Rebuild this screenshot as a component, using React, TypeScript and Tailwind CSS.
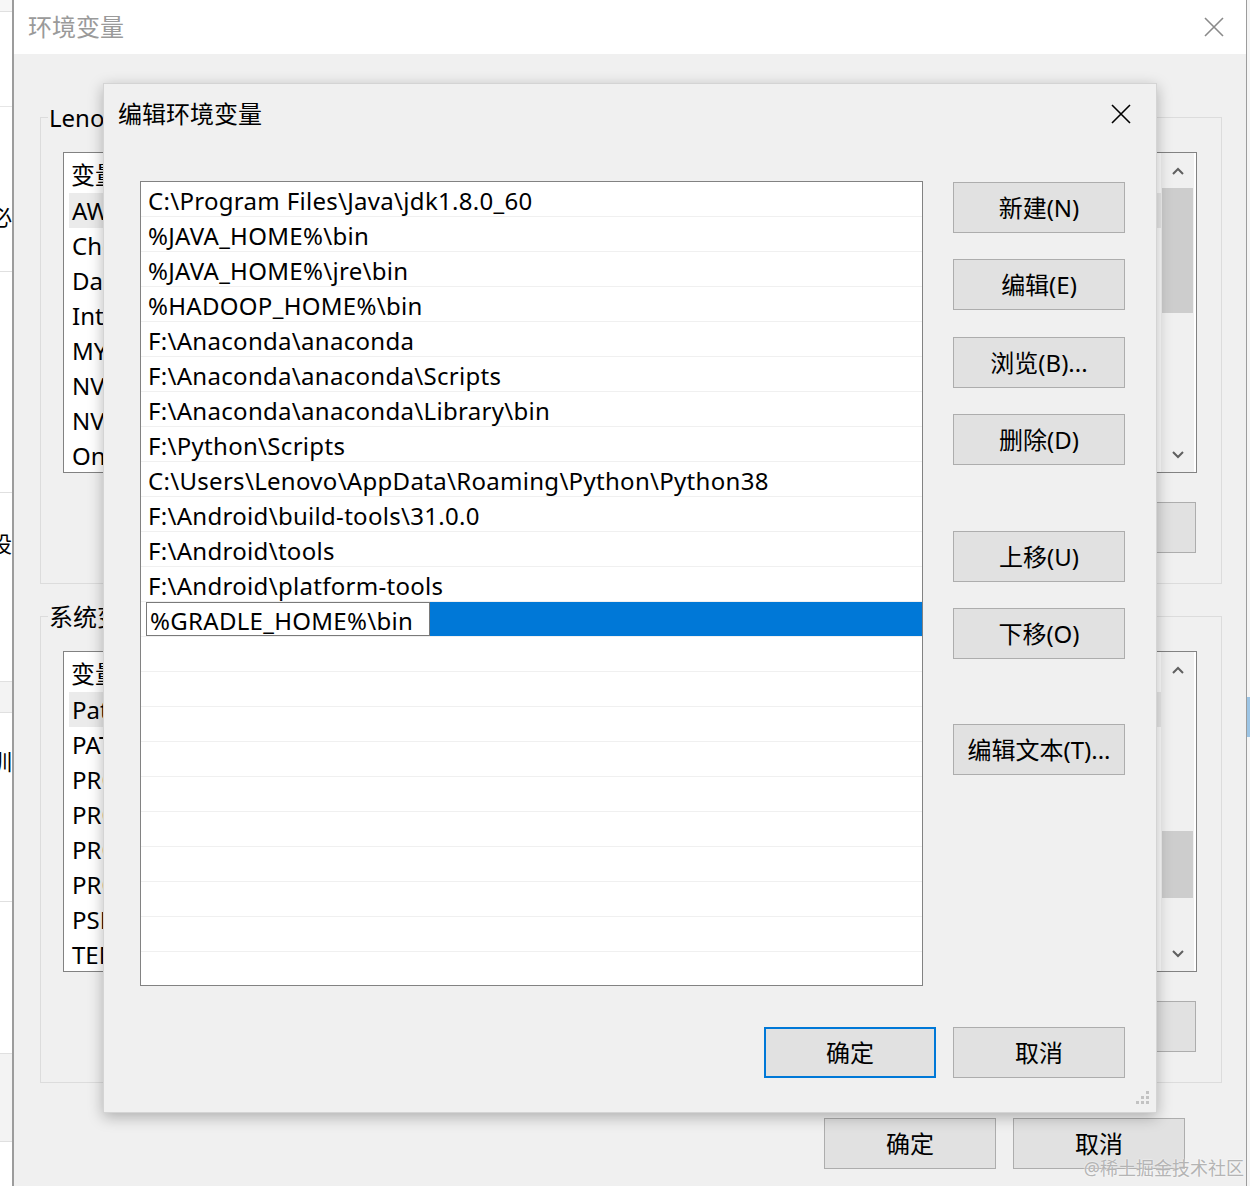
import React from 'react';

const FONT = "font-['Noto_Sans','Noto_Sans_CJK_SC',sans-serif]";

function ChevronUp() {
  return (
    <svg width="12" height="8" viewBox="0 0 12 8">
      <path d="M1 7 L6 2 L11 7" fill="none" stroke="#606060" strokeWidth="2" />
    </svg>
  );
}

function ChevronDown() {
  return (
    <svg width="12" height="8" viewBox="0 0 12 8">
      <path d="M1 1 L6 6 L11 1" fill="none" stroke="#606060" strokeWidth="2" />
    </svg>
  );
}

function CloseX({ color, size }: { color: string; size: number }) {
  return (
    <svg width={size} height={size} viewBox="0 0 20 20">
      <path d="M1 1 L19 19 M19 1 L1 19" stroke={color} strokeWidth="1.6" fill="none" />
    </svg>
  );
}

function WinButton({ label, primary, className = '' }: { label: string; primary?: boolean; className?: string }) {
  return (
    <div
      className={`h-[51px] w-[172px] shrink-0 flex items-center justify-center bg-[#e1e1e1] text-[24px] text-black ${
        primary ? 'border-2 border-[#0078d7]' : 'border border-[#adadad]'
      } ${className}`}
    >
      {label}
    </div>
  );
}

// list in the background window (mostly hidden behind the dialog)
function BgList({ rows, spacer, thumb }: { rows: string[]; spacer: string; thumb: string }) {
  return (
    <div className="h-[321px] border border-[#828282] bg-white flex overflow-hidden">
      <div className="flex-1 flex flex-col pt-[4px] text-[24px] text-black">
        <div className="h-[36px] flex items-center pl-[7px]">变量</div>
        {rows.map((r, i) => (
          <div
            key={i}
            className={`h-[35px] shrink-0 flex items-center whitespace-nowrap ${
              i === 0 ? 'ml-[5px] pl-[3px] bg-[#ebebeb]' : 'pl-[8px]'
            }`}
          >
            {r}
          </div>
        ))}
      </div>
      <div className="w-[33px] mr-[2px] bg-[#f0f0f0] flex flex-col">
        <div className="h-[35px] shrink-0 flex items-center justify-center">
          <ChevronUp />
        </div>
        <div className={spacer} />
        <div className={`${thumb} mx-[1px] bg-[#cdcdcd] shrink-0`} />
        <div className="flex-1" />
        <div className="h-[35px] shrink-0 flex items-center justify-center">
          <ChevronDown />
        </div>
      </div>
    </div>
  );
}

function GroupBox({ label, children, className = '' }: { label: string; children: React.ReactNode; className?: string }) {
  return (
    <div className={`relative border border-[#dcdcdc] h-[467px] pt-[34px] pl-[22px] pr-[24px] ${className}`}>
      <div className="absolute left-[7px] -top-[16px] px-[1px] bg-[#f0f0f0] text-[24px] text-black leading-[32px] whitespace-nowrap">
        {label}
      </div>
      {children}
    </div>
  );
}

const pathRows = [
  'C:\\Program Files\\Java\\jdk1.8.0_60',
  '%JAVA_HOME%\\bin',
  '%JAVA_HOME%\\jre\\bin',
  '%HADOOP_HOME%\\bin',
  'F:\\Anaconda\\anaconda',
  'F:\\Anaconda\\anaconda\\Scripts',
  'F:\\Anaconda\\anaconda\\Library\\bin',
  'F:\\Python\\Scripts',
  'C:\\Users\\Lenovo\\AppData\\Roaming\\Python\\Python38',
  'F:\\Android\\build-tools\\31.0.0',
  'F:\\Android\\tools',
  'F:\\Android\\platform-tools',
];

export default function App() {
  const emptyRows = Array.from({ length: 10 });

  return (
    <div className={`${FONT} relative w-[1250px] h-[1186px] overflow-hidden flex bg-[#f0f0f0]`}>
      {/* edge of another window on the left */}
      <div className="w-[12px] shrink-0 flex flex-col bg-[#f7f7f7] text-[22px] text-black">
        <div className="h-[12px] border-b border-[#e0e0e0]" />
        <div className="h-[95px] bg-white border-b border-[#e6e6e6]" />
        <div className="h-[165px] bg-white border-b border-[#e0e0e0] flex flex-col justify-end pb-[38px] overflow-hidden">
          <div className="flex justify-end whitespace-nowrap">务必</div>
        </div>
        <div className="h-[221px] bg-white border-b border-[#e0e0e0] overflow-hidden pt-[32px]">
          <div className="flex justify-end whitespace-nowrap">
            <span className="text-[#2e86de]">链接</span>，
          </div>
        </div>
        <div className="h-[189px] bg-white border-b border-[#e0e0e0] overflow-hidden pt-[34px]">
          <div className="flex justify-end whitespace-nowrap">预设</div>
        </div>
        <div className="h-[31px] bg-[#f3f3f3] border-b border-[#e0e0e0]" />
        <div className="h-[189px] bg-white border-b border-[#e0e0e0] overflow-hidden pt-[32px]">
          <div className="flex justify-end whitespace-nowrap">培训</div>
        </div>
        <div className="h-[152px] bg-white border-b border-[#e0e0e0]" />
        <div className="h-[88px] bg-[#f3f3f3] border-b border-[#e0e0e0]" />
        <div className="flex-1 bg-white" />
      </div>

      {/* background window: 环境变量 */}
      <div className="w-[1235px] shrink-0 border-l-2 border-r border-[#9c9c9c] flex flex-col bg-[#f0f0f0]">
        <div className="h-[54px] shrink-0 bg-white flex items-center justify-between pl-[14px] pr-[22px]">
          <span className="text-[24px] text-[#9a9a9a]">环境变量</span>
          <CloseX color="#8a8a8a" size={20} />
        </div>
        <div className="flex flex-col pl-[26px] pr-[24px]">
          <GroupBox label="Lenovo 的用户变量(U)" className="mt-[63px]">
            <BgList
              rows={['AWS_PROFILE', 'ChocolateyLastPathUpdate', 'DataGrip', 'IntelliJ IDEA', 'MYSQL_HOME', 'NVM_HOME', 'NVM_SYMLINK', 'OneDrive']}
              spacer="h-0"
              thumb="h-[125px]"
            />
            <div className="flex justify-end gap-[17px] mt-[29px] mr-[1px]">
              <WinButton label="新建(N)..." />
              <WinButton label="编辑(E)..." />
              <WinButton label="删除(D)" />
            </div>
          </GroupBox>
          <GroupBox label="系统变量(S)" className="mt-[32px]">
            <BgList
              rows={['Path', 'PATHEXT', 'PROCESSOR_ARCHITECTURE', 'PROCESSOR_IDENTIFIER', 'PROCESSOR_LEVEL', 'PROCESSOR_REVISION', 'PSModulePath', 'TEMP']}
              spacer="h-[144px]"
              thumb="h-[67px]"
            />
            <div className="flex justify-end gap-[17px] mt-[29px] mr-[1px]">
              <WinButton label="新建(W)..." />
              <WinButton label="编辑(I)..." />
              <WinButton label="删除(L)" />
            </div>
          </GroupBox>
          <div className="flex justify-end gap-[17px] mt-[35px] mr-[37px]">
            <WinButton label="确定" />
            <WinButton label="取消" />
          </div>
        </div>
      </div>

      {/* edge of window on the right */}
      <div className="flex-1 flex flex-col bg-[#f5f5f5]">
        <div className="h-[697px]" />
        <div className="h-[40px] bg-[#9cc4e4]" />
      </div>

      {/* dialog: 编辑环境变量 */}
      <div className="absolute left-[103px] top-[83px] w-[1054px] h-[1030px] bg-[#f0f0f0] border border-[#d4d4d4] shadow-[0_4px_14px_rgba(0,0,0,0.28)] flex flex-col">
        <div className="h-[60px] shrink-0 flex items-center justify-between pl-[14px] pr-[25px]">
          <span className="text-[24px] text-black">编辑环境变量</span>
          <CloseX color="#000000" size={20} />
        </div>
        <div className="flex mt-[37px] pl-[36px] pr-[31px] gap-[30px]">
          <div className="w-[783px] h-[805px] border border-[#828282] bg-white overflow-hidden flex flex-col text-[24px] tracking-[0.3px] text-black">
            {pathRows.map((r, i) => (
              <div key={i} className="h-[35px] shrink-0 border-b border-[#f0f0f0] flex items-center pl-[7px] pt-[3px] whitespace-nowrap">
                {r}
              </div>
            ))}
            <div className="h-[35px] shrink-0 border-b border-[#f0f0f0] pl-[5px] flex">
              <div className="flex-1 flex bg-[#0078d7]">
                <div className="w-[284px] h-[34px] bg-white border border-[#7a7a7a] flex items-center pl-[3px] pt-[3px] whitespace-nowrap">
                  %GRADLE_HOME%\bin
                </div>
              </div>
            </div>
            {emptyRows.map((_, i) => (
              <div key={i} className="h-[35px] shrink-0 border-b border-[#f0f0f0]" />
            ))}
          </div>
          <div className="flex flex-col pt-[1px]">
            <WinButton label="新建(N)" />
            <WinButton label="编辑(E)" className="mt-[26px]" />
            <WinButton label="浏览(B)..." className="mt-[27px]" />
            <WinButton label="删除(D)" className="mt-[26px]" />
            <WinButton label="上移(U)" className="mt-[66px]" />
            <WinButton label="下移(O)" className="mt-[26px]" />
            <WinButton label="编辑文本(T)..." className="mt-[65px]" />
          </div>
        </div>
        <div className="flex justify-end gap-[17px] mt-[41px] pr-[31px]">
          <WinButton label="确定" primary />
          <WinButton label="取消" />
        </div>
        <div className="flex-1 flex justify-end items-end pr-[6px] pb-[5px]">
          <svg width="16" height="16" viewBox="0 0 16 16">
            <rect x="12" y="0" width="3" height="3" fill="#c2c2c2" />
            <rect x="7" y="5" width="3" height="3" fill="#c2c2c2" />
            <rect x="12" y="5" width="3" height="3" fill="#c2c2c2" />
            <rect x="2" y="10" width="3" height="3" fill="#c2c2c2" />
            <rect x="7" y="10" width="3" height="3" fill="#c2c2c2" />
            <rect x="12" y="10" width="3" height="3" fill="#c2c2c2" />
          </svg>
        </div>
      </div>

      {/* watermark */}
      <div className="absolute right-[6px] bottom-[4px] text-[18px] text-[#b4b4b4] whitespace-nowrap [text-shadow:0_0_2px_#ffffff]">
        @稀土掘金技术社区
      </div>
    </div>
  );
}
